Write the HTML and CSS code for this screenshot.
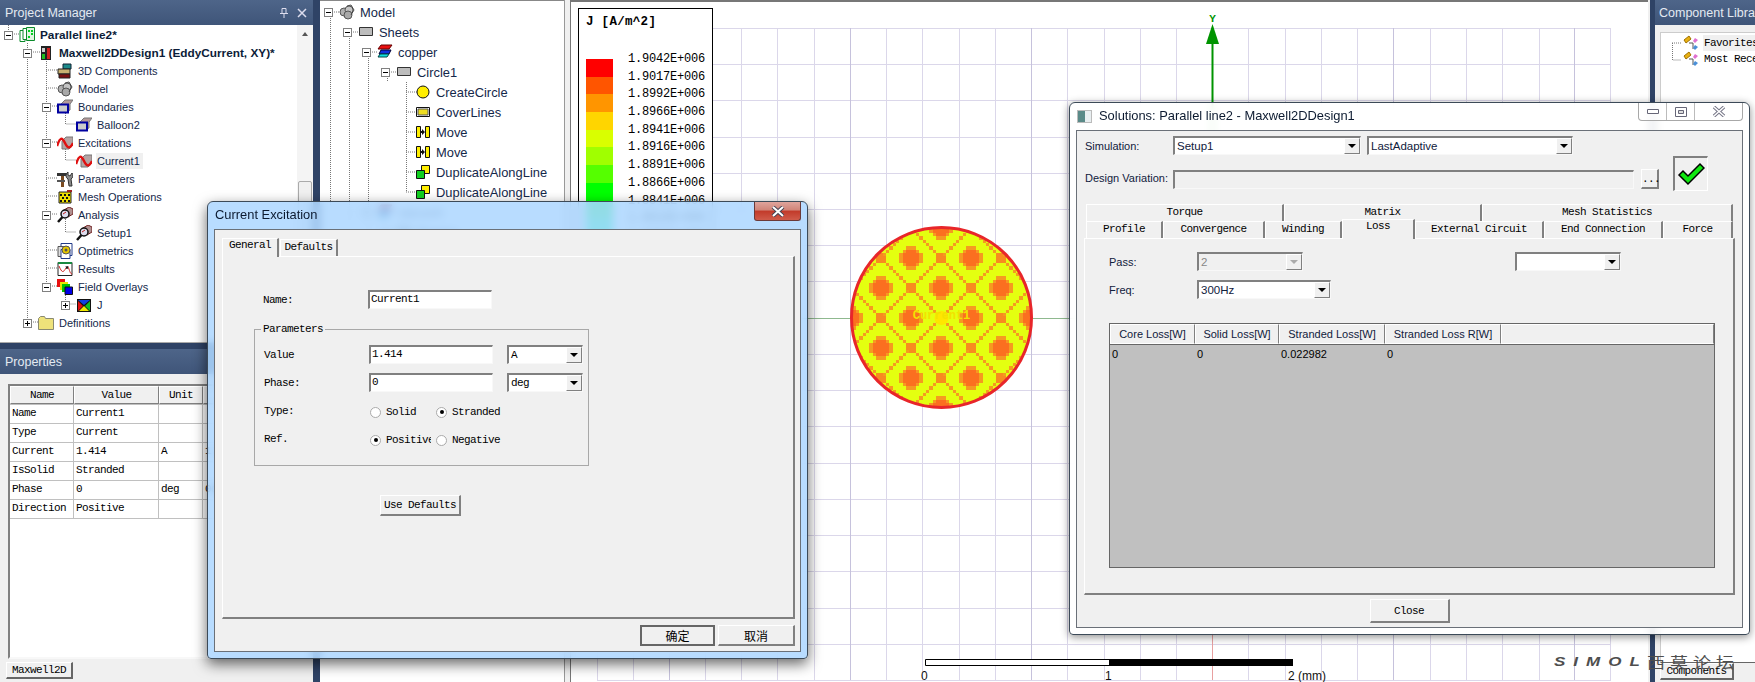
FILE: index.html
```html
<!DOCTYPE html>
<html lang="en">
<head>
    <meta charset="UTF-8">
    <title>Maxwell2D - Parallel line2</title>
    <link rel="stylesheet" href="styles.css">
</head>
<body>
    <!-- icon set used by the trees -->
    <svg class="defs" width="0" height="0">
        <symbol id="i-project" viewBox="0 0 16 16"><path d="M1 3.500h5v11h-5z" fill="#fff" stroke="#0a8a2a"/><path d="M4 1.500h6v11h-6z" fill="#fff" stroke="#0a8a2a"/><path d="M7.500.5h8v13h-8z" fill="#dff5e0" stroke="#0a8a2a"/><path d="M9 3h2v2h-2zM12 3h2v2h-2zM12 6h2v2h-2zM9 9h2v2h-2z" fill="#00d020"/></symbol>
        <symbol id="i-design" viewBox="0 0 16 16"><path d="M3 1h10v14h-10z" fill="#222"/><path d="M4 9h3v5h-3z" fill="#1ec020"/><path d="M9 3h3v11h-3z" fill="#d02020"/><path d="M4 3h3v4h-3z" fill="#ccc"/></symbol>
        <symbol id="i-comps" viewBox="0 0 16 16"><path d="M6 1h8v5h-8z" fill="#1c8a8a" stroke="#123"/><path d="M1 6h12v5h-12z" fill="#c8b070" stroke="#222"/><path d="M2 11h11v4h-11z" fill="#7a1010" stroke="#222"/></symbol>
        <symbol id="i-model" viewBox="0 0 16 16"><circle cx="5" cy="8" r="4" fill="#b0b0b0" stroke="#555"/><circle cx="10" cy="6" r="4" fill="#c4c4c4" stroke="#555"/><circle cx="9" cy="11" r="4" fill="#a8a8a8" stroke="#555"/><path d="M8 2l4-1 3 5-3 5" fill="none" stroke="#444"/></symbol>
        <symbol id="i-boundary" viewBox="0 0 16 16"><path d="M4 5l4-4h8l-3 4v6l-2 1h-7z" fill="#b49a9a" stroke="#777"/><path d="M1 5.500h10v8h-10z" fill="#ccc" stroke="#0000a0" stroke-width="2"/></symbol>
        <symbol id="i-excitation" viewBox="0 0 16 16"><path d="M5 6l4-4h7v8l-4 4h-7z" fill="#b4a4a4" stroke="#777"/><path d="M0 11c3-9 5-9 8-3s5 6 8 0" fill="none" stroke="#e01010" stroke-width="2.500"/></symbol>
        <symbol id="i-params" viewBox="0 0 16 16"><path d="M0 2h10v3h-10z" fill="#333"/><path d="M4 5h3v11h-3z" fill="#7a4a20"/><path d="M11 1a4 4 0 0 0 0 7l1 7h3l-1-7a4 4 0 0 0 1-6l-2 3-2-1z" fill="#888" stroke="#333"/><path d="M0 9h8v2h-8z" fill="#555"/></symbol>
        <symbol id="i-mesh" viewBox="0 0 16 16"><path d="M2 3h12v11h-12z" fill="#eedd00" stroke="#222"/><path d="M3 5h2v2h-2zM7 5h2v2h-2zM11 5h2v2h-2zM5 8h2v2h-2zM9 8h2v2h-2zM3 11h2v2h-2zM7 11h2v2h-2zM11 11h2v2h-2z" fill="#111"/><path d="M10 1h5v2h-5z" fill="#a02020"/></symbol>
        <symbol id="i-analysis" viewBox="0 0 16 16"><path d="M7 3l5-3 4 2v5l-5 3z" fill="#b09090" stroke="#702020"/><circle cx="8" cy="7" r="4" fill="#dde" stroke="#111" stroke-width="1.500"/><path d="M5.500 10l-4.500 5" stroke="#111" stroke-width="2.500"/><path d="M6 7l3-2" stroke="#c02020"/></symbol>
        <symbol id="i-opti" viewBox="0 0 16 16"><path d="M4 .5h11v12h-11z" fill="#fff" stroke="#223a88"/><path d="M1 3.500h10v10h-10z" fill="#ddd" stroke="#555"/><path d="M4 6.500h9v9h-9z" fill="#fff" stroke="#223a88"/><circle cx="9" cy="7" r="4" fill="#e6c800" stroke="#555"/><circle cx="9" cy="7" r="1.500" fill="#555"/></symbol>
        <symbol id="i-results" viewBox="0 0 16 16"><path d="M1 1.500h14v13h-14z" fill="#fff" stroke="#222"/><path d="M1 1h14v2h-14z" fill="#1a8a40"/><path d="M2 5c3 7 4 7 7 2s3 6 6 6" fill="none" stroke="#d02020"/><path d="M9 5l1 3 1-3" fill="none" stroke="#222"/></symbol>
        <symbol id="i-overlay" viewBox="0 0 16 16"><path d="M0 0h8v8h-8z" fill="#e81010"/><path d="M3 3h8v8h-8z" fill="#e8e800"/><path d="M5 5h8v8h-8z" fill="#00c000"/><path d="M8 8h7.500v7.500h-7.500z" fill="#0000e8" stroke="#111"/></symbol>
        <symbol id="i-j" viewBox="0 0 16 16"><path d="M1 2h14v13h-14z" fill="#111"/><path d="M2 3l12 0-6 5z" fill="#1040e0"/><path d="M2 4v10l5-5z" fill="#e01010"/><path d="M14 4v10l-5-5z" fill="#10c020"/><path d="M3 14h10l-5-5z" fill="#f0e800"/></symbol>
        <symbol id="i-folder" viewBox="0 0 16 16"><path d="M.5 3.500l2-2h4l1 2h8v11h-15z" fill="#eee27a" stroke="#8a8a70"/></symbol>
        <symbol id="i-sheet" viewBox="0 0 16 16"><path d="M1.500 3.500h13v8h-13z" fill="#bcbcbc" stroke="#333"/></symbol>
        <symbol id="i-copper" viewBox="0 0 16 16"><path d="M4 1h11l-3 4h-11z" fill="#e81010" stroke="#600"/><path d="M4 6h10l-2 4h-10z" fill="#1030e0" stroke="#003"/><path d="M3 10h9l-2 3h-9z" fill="#10e0e0" stroke="#044"/></symbol>
        <symbol id="i-circle" viewBox="0 0 16 16"><circle cx="8" cy="8" r="6" fill="#ffee00" stroke="#111"/></symbol>
        <symbol id="i-cover" viewBox="0 0 16 16"><path d="M1.500 3.500h13v9h-13z" fill="#fff" stroke="#111"/><path d="M3 5h10v6h-10z" fill="#eedd20" stroke="#555"/></symbol>
        <symbol id="i-move" viewBox="0 0 16 16"><path d="M1.500 2.500h4v11h-4zM10.500 2.500h4v11h-4z" fill="#ffee00" stroke="#111"/><path d="M6 7h1v-2l3 3-3 3v-2h-1z" fill="#111"/></symbol>
        <symbol id="i-dup" viewBox="0 0 16 16"><path d="M6.500 1.500h8v8h-8z" fill="#ffee00" stroke="#111"/><path d="M1.500 6.500h8v8h-8z" fill="#10d020" stroke="#111"/></symbol>
        <symbol id="i-lib" viewBox="0 0 16 16"><path d="M1 5l5-4 2 3-5 4z" fill="#e8b010" stroke="#a07000"/><path d="M6 8h4v6" fill="none" stroke="#555"/><path d="M12 3l3 2-3 3-2-2z" fill="#e070d0"/><path d="M12 10l3 2-3 3-2-2z" fill="#4a90d8"/></symbol>
    </svg>

    <div class="app">
        <!-- project manager + properties -->
        <div class="left">
            <section class="project">
                <div class="pane-title"><span>Project Manager</span><span class="title-btns"><svg width="10" height="12" viewBox="0 0 10 12"><path d="M3 1.500h4v5h-4zM1 6.500h8M5 7v4" fill="none" stroke="#dde"/></svg><svg width="10" height="10" viewBox="0 0 10 10"><path d="M1 1l8 8M9 1l-8 8" stroke="#dde" stroke-width="1.500"/></svg></span></div>
                <div class="tree-box">
                    <svg class="tree-lines" width="297" height="318" viewBox="0 26 297 318"><path d="M8.500 26v5M27.500 44v275M46.500 62v230M27 53h13M46 71h11M46 89h11M46 107h11M46 143h11M46 179h11M46 197h11M46 215h11M46 251h11M46 269h11M46 287h11M65.500 112v13h11M65.500 148v13h11M65.500 220v13h11M65.500 292v13h11M8 35h11M27 323h12" fill="none" stroke="#777" stroke-dasharray="1 1"/></svg>
                    <div class="tree">
                        <div class="row l0"><span class="exp minus"></span><svg class="ic"><use href="#i-project"/></svg><b>Parallel line2*</b></div>
                        <div class="row l1"><span class="exp minus"></span><svg class="ic"><use href="#i-design"/></svg><b>Maxwell2DDesign1 (EddyCurrent, XY)*</b></div>
                        <div class="row l2"><span class="exp none"></span><svg class="ic"><use href="#i-comps"/></svg><span>3D Components</span></div>
                        <div class="row l2"><span class="exp none"></span><svg class="ic"><use href="#i-model"/></svg><span>Model</span></div>
                        <div class="row l2"><span class="exp minus"></span><svg class="ic"><use href="#i-boundary"/></svg><span>Boundaries</span></div>
                        <div class="row l3"><span class="exp none"></span><svg class="ic"><use href="#i-boundary"/></svg><span>Balloon2</span></div>
                        <div class="row l2"><span class="exp minus"></span><svg class="ic"><use href="#i-excitation"/></svg><span>Excitations</span></div>
                        <div class="row l3"><span class="exp none"></span><svg class="ic"><use href="#i-excitation"/></svg><span class="picked">Current1</span></div>
                        <div class="row l2"><span class="exp none"></span><svg class="ic"><use href="#i-params"/></svg><span>Parameters</span></div>
                        <div class="row l2"><span class="exp none"></span><svg class="ic"><use href="#i-mesh"/></svg><span>Mesh Operations</span></div>
                        <div class="row l2"><span class="exp minus"></span><svg class="ic"><use href="#i-analysis"/></svg><span>Analysis</span></div>
                        <div class="row l3"><span class="exp none"></span><svg class="ic"><use href="#i-analysis"/></svg><span>Setup1</span></div>
                        <div class="row l2"><span class="exp none"></span><svg class="ic"><use href="#i-opti"/></svg><span>Optimetrics</span></div>
                        <div class="row l2"><span class="exp none"></span><svg class="ic"><use href="#i-results"/></svg><span>Results</span></div>
                        <div class="row l2"><span class="exp minus"></span><svg class="ic"><use href="#i-overlay"/></svg><span>Field Overlays</span></div>
                        <div class="row l3"><span class="exp plus"></span><svg class="ic"><use href="#i-j"/></svg><span>J</span></div>
                        <div class="row l1"><span class="exp plus"></span><svg class="ic"><use href="#i-folder"/></svg><span>Definitions</span></div>
                    </div>
                    <div class="scrollbar"><span class="sb-up"></span><span class="sb-thumb"></span></div>
                </div>
            </section>
            <div class="sash-h"></div>
            <section class="props">
                <div class="pane-title"><span>Properties</span></div>
                <div class="props-body">
                    <div class="props-frame">
                        <div class="prop-row prop-head"><span>Name</span><span>Value</span><span>Unit</span><span>Evaluated</span></div>
                        <div class="prop-row"><span>Name</span><span>Current1</span><span></span><span></span></div>
                        <div class="prop-row"><span>Type</span><span>Current</span><span></span><span></span></div>
                        <div class="prop-row"><span>Current</span><span>1.414</span><span>A</span><span>1.414A</span></div>
                        <div class="prop-row"><span>IsSolid</span><span>Stranded</span><span></span><span></span></div>
                        <div class="prop-row"><span>Phase</span><span>0</span><span>deg</span><span>0deg</span></div>
                        <div class="prop-row"><span>Direction</span><span>Positive</span><span></span><span></span></div>
                    </div>
                    <div class="bottom-tab">Maxwell2D</div>
                </div>
            </section>
        </div>
        <div class="sash-v"></div>

        <!-- model tree -->
        <div class="model-tree">
            <svg class="tree-lines" width="244" height="260" viewBox="320 0 244 260"><path d="M330.500 16v190M349.500 36v190M368.500 56v190M387.500 76v6M406.500 82v110M330 12h10M349 32h11M368 52h10M387 72h11M406 92h12M406 112h12M406 132h12M406 152h12M406 172h12M406 192h12M368 212h10" fill="none" stroke="#777" stroke-dasharray="1 1"/></svg>
            <div class="tree tall">
                <div class="row l0"><span class="exp minus"></span><svg class="ic"><use href="#i-model"/></svg><span>Model</span></div>
                <div class="row l1"><span class="exp minus"></span><svg class="ic"><use href="#i-sheet"/></svg><span>Sheets</span></div>
                <div class="row l2"><span class="exp minus"></span><svg class="ic"><use href="#i-copper"/></svg><span>copper</span></div>
                <div class="row l3"><span class="exp minus"></span><svg class="ic"><use href="#i-sheet"/></svg><span>Circle1</span></div>
                <div class="row l4"><span class="exp none"></span><svg class="ic"><use href="#i-circle"/></svg><span>CreateCircle</span></div>
                <div class="row l4"><span class="exp none"></span><svg class="ic"><use href="#i-cover"/></svg><span>CoverLines</span></div>
                <div class="row l4"><span class="exp none"></span><svg class="ic"><use href="#i-move"/></svg><span>Move</span></div>
                <div class="row l4"><span class="exp none"></span><svg class="ic"><use href="#i-move"/></svg><span>Move</span></div>
                <div class="row l4"><span class="exp none"></span><svg class="ic"><use href="#i-dup"/></svg><span>DuplicateAlongLine</span></div>
                <div class="row l4"><span class="exp none"></span><svg class="ic"><use href="#i-dup"/></svg><span>DuplicateAlongLine</span></div>
                <div class="row l2"><span class="exp minus"></span><svg class="ic"><use href="#i-copper"/></svg><span>vacuum</span></div>
                <div class="row l3"><span class="exp minus"></span><svg class="ic"><use href="#i-sheet"/></svg><span>Region</span></div>
            </div>
        </div>
        <div class="sash-gap"></div>

        <!-- 2D view -->
        <div class="view">
            <svg class="canvas" width="1078" height="682" viewBox="570 0 1078 682">
                <defs>
                    <pattern id="solve" x="926" y="273" width="60" height="60" patternUnits="userSpaceOnUse" viewBox="0 0 18 18" shape-rendering="crispEdges">
                        <rect width="18" height="18" fill="#e4ff10"/>
                        <path fill="#f59a20" d="M3 1h3v7h-3zM1 3h7v3h-7zM2 2h5v5h-5zM12 10h3v7h-3zM10 12h7v3h-7zM11 11h5v5h-5z"/>
                        <path fill="#fb6f20" d="M2 3h5v3h-5zM3 2h3v5h-3zM11 12h5v3h-5zM12 11h3v5h-3z"/>
                        <path fill="#f88a20" d="M12 3h3v3h-3zM3 12h3v3h-3z"/>
                        <path fill="#f59a20" d="M12 5h1v1h-1zM11 6h1v1h-1zM10 7h1v1h-1zM9 8h1v1h-1zM8 9h1v1h-1zM7 10h1v1h-1zM6 11h1v1h-1zM5 12h1v1h-1zM15 6h1v1h-1zM16 7h1v1h-1zM17 8h1v1h-1zM0 9h1v1h-1zM1 10h1v1h-1zM2 11h1v1h-1zM6 15h1v1h-1zM7 16h1v1h-1zM8 17h1v1h-1zM9 0h1v1h-1zM10 1h1v1h-1zM11 2h1v1h-1zM15 2h1v1h-1zM16 1h1v1h-1zM17 0h1v1h-1zM0 17h1v1h-1zM1 16h1v1h-1zM2 15h1v1h-1z"/>
                    </pattern>
                </defs>
                <path class="grid" d="M597.500 28V680M633.500 28V680M705.500 28V680M741.500 28V680M777.500 28V680M814.500 28V680M886.500 28V680M922.500 28V680M959.500 28V680M995.500 28V680M1067.500 28V680M1104.500 28V680M1140.500 28V680M1176.500 28V680M1248.500 28V680M1285.500 28V680M1321.500 28V680M1357.500 28V680M1430.500 28V680M1466.500 28V680M1502.500 28V680M1539.500 28V680M1610.500 28V680"/>
                <path class="grid" d="M597 28.500H1611M597 64.500H1611M597 100.500H1611M597 137.500H1611M597 173.500H1611M597 209.500H1611M597 245.500H1611M597 281.500H1611M597 354.500H1611M597 390.500H1611M597 426.500H1611M597 463.500H1611M597 499.500H1611M597 535.500H1611M597 571.500H1611M597 608.500H1611M597 644.500H1611M597 680.500H1611"/>
                <path class="grid-major" d="M669.500 28V680M850.500 28V680M1031.500 28V680M1393.500 28V680M1574.500 28V680"/>
                <path d="M1212.500 420V680" stroke="#e8a0a0" fill="none"/>
                <path d="M597 318.500H1610" stroke="#8fb98f" fill="none"/>
                <path d="M1212.500 44V318" stroke="#009400" stroke-width="2" fill="none"/>
                <path d="M1212.500 24l6.500 20h-13z" fill="#009400"/>
                <text class="axis-label" x="1212.500" y="22">Y</text>
                <circle cx="941.500" cy="317.500" r="90" fill="url(#solve)" stroke="#e8262a" stroke-width="3"/>
                <circle cx="941.500" cy="318" r="7" fill="#ffe600"/>
                <text class="coil-label" x="941.500" y="319">Current1</text>
                <path d="M925.500 659.500h184v6h-184z" fill="#fff" stroke="#000"/>
                <path d="M1109 659h184v7h-184z" fill="#000"/>
                <text class="scale-label" x="921" y="680">0</text>
                <text class="scale-label" x="1105" y="680">1</text>
                <text class="scale-label" x="1288" y="680">2 (mm)</text>
            </svg>
            <div class="legend">
                <div class="legend-title">J [A/m^2]</div>
                <div class="legend-body">
                    <div class="legend-bars">
                        <span class="bar-0"></span><span class="bar-1"></span><span class="bar-2"></span><span class="bar-3"></span><span class="bar-4"></span><span class="bar-5"></span><span class="bar-6"></span><span class="bar-7"></span><span class="bar-8"></span><span class="bar-9"></span><span class="bar-10"></span>
                    </div>
                    <div class="legend-vals">
                        <span>1.9042E+006</span><span>1.9017E+006</span><span>1.8992E+006</span><span>1.8966E+006</span><span>1.8941E+006</span><span>1.8916E+006</span><span>1.8891E+006</span><span>1.8866E+006</span><span>1.8841E+006</span><span>1.8816E+006</span><span>1.8791E+006</span>
                    </div>
                </div>
            </div>
        </div>
        <div class="sash-v thin"></div>

        <!-- component library -->
        <div class="right">
            <div class="pane-title"><span>Component Library</span></div>
            <div class="lib-body">
                <div class="lib-tree">
                    <svg class="tree-lines" width="12" height="34" viewBox="0 0 12 34"><path d="M2.500 8v17h9M2 8h10" fill="none" stroke="#777" stroke-dasharray="1 1"/></svg>
                    <div class="lib-row"><svg class="ic"><use href="#i-lib"/></svg><span class="picked">Favorites</span></div>
                    <div class="lib-row"><svg class="ic"><use href="#i-lib"/></svg><span>Most Recently Used</span></div>
                </div>
                <div class="bottom-tab lib-tab">Components</div>
            </div>
        </div>
    </div>

    <!-- Current Excitation dialog -->
    <div class="win win-current">
        <div class="caption">
            <span class="caption-text">Current Excitation</span>
            <span class="close-red"><svg width="14" height="11" viewBox="0 0 14 11"><path d="M2 1l10 9M12 1l-10 9" stroke="#445" stroke-width="4"/><path d="M2 1l10 9M12 1l-10 9" stroke="#fff" stroke-width="2"/></svg></span>
        </div>
        <div class="client">
            <div class="tabs small-tabs">
                <span class="tab active tab-general">General</span><span class="tab tab-defaults">Defaults</span>
            </div>
            <div class="tab-pane current-pane">
                <div class="form-row name-row"><label>Name:</label><span class="field">Current1</span></div>
                <fieldset class="group">
                    <legend>Parameters</legend>
                    <div class="form-row"><label>Value</label><span class="field">1.414</span><span class="combo unit"><span class="combo-text">A</span><i class="arrow"></i></span></div>
                    <div class="form-row"><label>Phase:</label><span class="field">0</span><span class="combo unit"><span class="combo-text">deg</span><i class="arrow"></i></span></div>
                    <div class="form-row"><label>Type:</label><span class="radios"><span class="radio-item"><i class="radio"></i>Solid</span><span class="radio-item"><i class="radio on"></i>Stranded</span></span></div>
                    <div class="form-row"><label>Ref.</label><span class="radios"><span class="radio-item clip"><i class="radio on"></i>Positive</span><span class="radio-item"><i class="radio"></i>Negative</span></span></div>
                </fieldset>
                <button class="btn use-defaults">Use Defaults</button>
            </div>
            <div class="dlg-buttons">
                <button class="btn cjk default">确定</button>
                <button class="btn cjk cancel">取消</button>
            </div>
        </div>
    </div>

    <!-- Solutions dialog -->
    <div class="win win-solutions">
        <div class="caption">
            <span class="app-icon"></span>
            <span class="caption-text">Solutions: Parallel line2 - Maxwell2DDesign1</span>
            <span class="cap-group">
                <span class="cap-btn"><svg width="12" height="6" viewBox="0 0 12 6"><path d="M.5.5h11v4h-11z" fill="#fff" stroke="#667"/></svg></span>
                <span class="cap-btn"><svg width="12" height="10" viewBox="0 0 12 10"><path d="M.5.5h11v9h-11z" fill="#fff" stroke="#667"/><path d="M3.500 3.500h5v3h-5z" fill="#ddd" stroke="#667"/></svg></span>
                <span class="cap-btn wide"><svg width="14" height="11" viewBox="0 0 14 11"><path d="M2 1l10 9M12 1l-10 9" stroke="#778" stroke-width="3.500"/><path d="M2 1l10 9M12 1l-10 9" stroke="#fff" stroke-width="1.500"/></svg></span>
            </span>
        </div>
        <div class="client sol-client">
            <div class="sol-top">
                <label class="sans">Simulation:</label>
                <span class="combo sans"><span class="combo-text">Setup1</span><i class="arrow"></i></span>
                <span class="combo sans second"><span class="combo-text">LastAdaptive</span><i class="arrow"></i></span>
                <label class="sans dv-label">Design Variation:</label>
                <span class="field disabled dv-field"></span>
                <button class="btn dots">...</button>
                <span class="check-btn"><svg width="28" height="24" viewBox="0 0 28 24"><path d="M2 13l4-4 5 5L23 2l4 4-16 16z" fill="#10e810" stroke="#000" stroke-width="1.500"/></svg></span>
            </div>
            <div class="tabs tabs-row1">
                <span class="tab w-torque">Torque</span><span class="tab w-matrix">Matrix</span><span class="tab w-mesh">Mesh Statistics</span>
            </div>
            <div class="tabs tabs-row2">
                <span class="tab w-profile">Profile</span><span class="tab w-conv">Convergence</span><span class="tab w-wind">Winding</span><span class="tab active w-loss">Loss</span><span class="tab w-ext">External Circuit</span><span class="tab w-end">End Connection</span><span class="tab w-force">Force</span>
            </div>
            <div class="tab-pane sol-pane">
                <div class="loss-form">
                    <label class="sans">Pass:</label>
                    <span class="combo sans off w-pass"><span class="combo-text">2</span><i class="arrow"></i></span>
                    <span class="combo sans w-pass blank"><span class="combo-text"></span><i class="arrow"></i></span>
                    <label class="sans">Freq:</label>
                    <span class="combo sans w-freq"><span class="combo-text">300Hz</span><i class="arrow"></i></span>
                </div>
                <div class="loss-table">
                    <div class="loss-row loss-head"><span>Core Loss[W]</span><span>Solid Loss[W]</span><span>Stranded Loss[W]</span><span>Stranded Loss R[W]</span><span></span></div>
                    <div class="loss-row loss-data"><span>0</span><span>0</span><span>0.022982</span><span>0</span><span></span></div>
                </div>
            </div>
            <div class="close-row"><button class="btn close-btn">Close</button></div>
        </div>
    </div>

    <div class="watermark"><span class="wm-latin">SIMOL</span><span class="wm-cjk">西莫论坛</span></div>
</body>
</html>
```

FILE: styles.css
```css
/* page is one fixed desktop-sized window */
html, body {
    margin: 0;
    height: 100%;
    overflow: hidden;
}
body {
    position: relative;
    width: 1755px;
    height: 682px;
    background: #f0f0f0;
    font-family: "Liberation Sans", Arial, sans-serif;
    font-size: 12px;
    color: #000;
}
.defs {
    position: absolute;
}
.app {
    display: flex;
    height: 682px;
}

/* docked panes */
.left {
    width: 313px;
    display: flex;
    flex-direction: column;
}
.pane-title {
    height: 25px;
    flex: none;
    display: flex;
    align-items: center;
    justify-content: space-between;
    padding: 0 5px;
    background: linear-gradient(to bottom, #4e6589, #3f5579);
    color: #e4eaf2;
    font-size: 12.500px;
    white-space: nowrap;
    overflow: hidden;
}
.title-btns {
    display: flex;
    gap: 8px;
    align-items: center;
    padding-right: 1px;
}
.project {
    height: 343px;
    display: flex;
    flex-direction: column;
}
.tree-box {
    position: relative;
    flex: 1;
    background: #fff;
    border-bottom: 1px solid #aaa;
}
.tree-lines {
    position: absolute;
    left: 0;
    top: 0;
}
.tree {
    position: relative;
    padding-top: 1px;
    font-size: 11px;
    color: #14284a;
}
.row {
    display: flex;
    align-items: center;
    height: 18px;
    white-space: nowrap;
}
.row b {
    color: #0c1c38;
    font-size: 11.800px;
}
.l0 { padding-left: 4px; }
.l1 { padding-left: 23px; }
.l2 { padding-left: 42px; }
.l3 { padding-left: 61px; }
.l4 { padding-left: 80px; }
.exp {
    position: relative;
    width: 9px;
    height: 9px;
    flex: none;
    margin-right: 6px;
    border: 1px solid #808080;
    box-sizing: border-box;
    background: #fff;
}
.exp.none {
    border: none;
    background: none;
}
.exp.minus::before,
.exp.plus::before {
    content: "";
    position: absolute;
    left: 1px;
    top: 3px;
    width: 5px;
    height: 1px;
    background: #000;
}
.exp.plus::after {
    content: "";
    position: absolute;
    left: 3px;
    top: 1px;
    width: 1px;
    height: 5px;
    background: #000;
}
.ic {
    width: 16px;
    height: 16px;
    flex: none;
    margin-right: 5px;
}
.picked {
    background: #f0f0f0;
    padding: 2px 3px 2px 1px;
    margin-left: -1px;
}
.scrollbar {
    position: absolute;
    right: 0;
    top: 0;
    bottom: 0;
    width: 16px;
    background: #f4f4f4;
    display: flex;
    flex-direction: column;
    align-items: center;
}
.sb-up {
    width: 0;
    height: 0;
    margin-top: 7px;
    border: 3px solid transparent;
    border-top: none;
    border-bottom: 4px solid #555;
}
.sb-thumb {
    width: 14px;
    height: 130px;
    margin-top: 145px;
    background: #f0f0f0;
    border: 1px solid #aaa;
    box-sizing: border-box;
    border-radius: 2px;
}
.sash-h {
    height: 6px;
    flex: none;
    background: #2f4366;
}
.sash-v {
    width: 7px;
    flex: none;
    background: #2f4366;
}
.sash-v.thin {
    width: 5px;
    margin-left: 2px;
}
.props {
    flex: 1;
    display: flex;
    flex-direction: column;
}

/* SimSun-looking monospace used all over the old dialogs */
.props-body,
.tab,
.current-pane,
.btn,
.lib-tree,
.bottom-tab {
    font-family: "Liberation Mono", "DejaVu Sans Mono", monospace;
    font-size: 11px;
    letter-spacing: -0.600px;
}
.props-body {
    flex: 1;
    padding: 10px 5px 0 8px;
}
.props-frame {
    height: 275px;
    box-sizing: border-box;
    background: #fff;
    border: 2px solid #808080;
    border-right-color: #f8f8f8;
    border-bottom-color: #f8f8f8;
}
.prop-row {
    display: grid;
    grid-template-columns: 64px 85px 44px 1fr;
    height: 19px;
    border-bottom: 1px solid #c0c0c0;
    box-sizing: border-box;
    line-height: 17px;
}
.prop-row span {
    border-right: 1px solid #c0c0c0;
    padding-left: 2px;
    white-space: nowrap;
    overflow: hidden;
}
.prop-head {
    background: #f0f0f0;
    text-align: center;
}
.prop-head span {
    border: 1px solid #fff;
    border-right-color: #808080;
    border-bottom-color: #808080;
    padding: 0;
}
.bottom-tab {
    width: 67px;
    height: 17px;
    margin: 3px 0 0 -2px;
    line-height: 15px;
    text-align: center;
    box-sizing: border-box;
    background: #f0f0f0;
    border: 1px solid #fff;
    border-right: 2px solid #666;
    border-bottom: 2px solid #666;
}

/* model tree */
.model-tree {
    position: relative;
    width: 244px;
    flex: none;
    background: #fff;
    border-top: 1px solid #888;
    box-sizing: border-box;
    overflow: hidden;
}
.model-tree .tree-lines {
    top: -1px;
}
.tree.tall {
    font-size: 12.900px;
}
.tree.tall .row {
    height: 20px;
}
.sash-gap {
    width: 6px;
    flex: none;
    background: #f0f0f0;
    border-left: 1px solid #999;
    box-sizing: border-box;
}

/* 2d view */
.view {
    position: relative;
    width: 1078px;
    flex: none;
    background: #fff;
    border-left: 1px solid #777;
    border-top: 2px solid #777;
    box-sizing: border-box;
    overflow: hidden;
}
.canvas {
    position: absolute;
    left: -1px;
    top: -2px;
}
.grid {
    fill: none;
    stroke: #dbd7ea;
}
.grid-major {
    fill: none;
    stroke: #c6c2dc;
}
.axis-label {
    font-family: "Liberation Mono", monospace;
    font-size: 11px;
    font-weight: bold;
    fill: #009400;
    text-anchor: middle;
}
.coil-label {
    font-family: "Liberation Mono", monospace;
    font-size: 12px;
    font-weight: bold;
    fill: #f2e200;
    text-anchor: middle;
}
.scale-label {
    font-family: "Liberation Sans", Arial, sans-serif;
    font-size: 12px;
    fill: #111;
}
.legend {
    position: absolute;
    left: 7px;
    top: 6px;
    width: 135px;
    height: 320px;
    box-sizing: border-box;
    background: #fff;
    border: 1px solid #000;
    padding: 6px 7px;
    font-family: "Liberation Mono", monospace;
}
.legend-title {
    font-size: 12.500px;
    font-weight: bold;
    letter-spacing: 0.300px;
}
.legend-body {
    display: flex;
    gap: 15px;
    margin-top: 30px;
}
.legend-bars {
    display: flex;
    flex-direction: column;
    width: 35px;
}
.legend-bars span {
    height: 17.700px;
}
.bar-0 { background: #ff0000; }
.bar-1 { background: #ff5500; }
.bar-2 { background: #ff9500; }
.bar-3 { background: #ffd500; }
.bar-4 { background: #d9ff00; }
.bar-5 { background: #a0ff00; }
.bar-6 { background: #55ff00; }
.bar-7 { background: #00ff00; }
.bar-8 { background: #00ff55; }
.bar-9 { background: #00ff99; }
.bar-10 { background: #00ffd5; }
.legend-vals {
    display: flex;
    flex-direction: column;
    margin-top: -8px;
    font-size: 12px;
    letter-spacing: -0.200px;
    white-space: nowrap;
}
.legend-vals span {
    height: 17.700px;
    line-height: 17px;
}

/* component library */
.right {
    flex: 1;
    display: flex;
    flex-direction: column;
    overflow: hidden;
}
.right .pane-title {
    justify-content: flex-start;
    padding-left: 4px;
}
.lib-body {
    flex: 1;
    padding: 7px 0 2px 5px;
    display: flex;
    flex-direction: column;
}
.lib-tree {
    position: relative;
    flex: 1;
    background: #fff;
    padding: 2px 0 0 22px;
    white-space: nowrap;
    overflow: hidden;
    border-left: 1px solid #ccc;
    border-top: 1px solid #ccc;
    border-bottom: 1px solid #666;
}
.lib-tree .tree-lines {
    left: 9px;
    top: 2px;
}
.lib-row {
    display: flex;
    align-items: center;
    height: 16px;
}
.lib-tab {
    width: 74px;
    margin: 0;
}

/* floating dialogs: aero glass frame */
.win {
    position: absolute;
    box-sizing: border-box;
    border: 1px solid #3c4a58;
    border-radius: 6px 6px 4px 4px;
    display: flex;
    flex-direction: column;
    padding: 0 6px 6px;
    backdrop-filter: blur(4px);
    box-shadow: 0 5px 14px rgba(0, 0, 0, 0.6);
}
.win-current {
    left: 207px;
    top: 201px;
    width: 601px;
    height: 458px;
    background: rgba(172, 214, 255, 0.85);
}
.win-solutions {
    left: 1069px;
    top: 102px;
    width: 681px;
    height: 533px;
    background: rgba(255, 255, 255, 0.88);
    box-shadow: 0 2px 8px rgba(0, 0, 0, 0.45);
}
.caption {
    height: 27px;
    flex: none;
    display: flex;
    align-items: flex-start;
    color: #0c1a30;
    font-size: 12.900px;
}
.caption-text {
    margin: 5px 0 0 1px;
    white-space: nowrap;
}
.close-red {
    margin-left: auto;
    width: 47px;
    height: 19px;
    display: flex;
    align-items: center;
    justify-content: center;
    box-sizing: border-box;
    border: 1px solid #6b3a3a;
    border-top: none;
    border-radius: 0 0 3px 3px;
    background: linear-gradient(to bottom, #dfa49c 0%, #d08478 45%, #c23a2a 50%, #cf5b4a 100%);
}
.app-icon {
    width: 15px;
    height: 13px;
    margin: 7px 6px 0 1px;
    background: linear-gradient(to right, #5a8a88 0 55%, #e8eef0 55%);
    border: 1px solid #bbb;
    box-sizing: border-box;
}
.cap-group {
    margin-left: auto;
    display: flex;
    height: 18px;
    box-sizing: border-box;
    border: 1px solid #a8a8a8;
    border-top: none;
    border-radius: 0 0 4px 4px;
    background: rgba(255, 255, 255, 0.5);
}
.cap-btn {
    width: 27px;
    display: flex;
    align-items: center;
    justify-content: center;
    border-right: 1px solid #bbb;
}
.cap-btn.wide {
    width: 47px;
    border-right: none;
}
.client {
    flex: 1;
    background: #f0f0f0;
    border: 1px solid #6a7078;
    box-sizing: border-box;
    padding: 8px 5px 0 7px;
    display: flex;
    flex-direction: column;
}

/* tabs */
.tabs {
    display: flex;
    align-items: flex-end;
}
.tab {
    box-sizing: border-box;
    height: 17px;
    line-height: 15px;
    text-align: center;
    white-space: nowrap;
    background: #f0f0f0;
    border: 1px solid #fff;
    border-bottom: none;
    border-right: 2px solid #808080;
}
.tab.active {
    position: relative;
    z-index: 1;
    height: 20px;
    margin-bottom: -1px;
    line-height: 13px;
}
.small-tabs .tab {
    height: 17px;
}
.small-tabs .tab.active {
    height: 19px;
}
.tab-general { width: 57px; }
.tab-defaults { width: 58px; margin-left: 1px; }
.tab-pane {
    box-sizing: border-box;
    border: 1px solid #fff;
    border-right: 2px solid #808080;
    border-bottom: 2px solid #808080;
}
.current-pane {
    height: 363px;
    padding: 33px 0 0 31px;
}
.form-row {
    display: grid;
    grid-template-columns: 114px 124px 90px;
    height: 19px;
    align-items: center;
    margin-bottom: 9px;
}
.form-row label {
    padding-left: 9px;
}
.name-row {
    margin-bottom: 14px;
}
.unit {
    margin-left: 14px;
}
.field {
    box-sizing: border-box;
    height: 19px;
    line-height: 15px;
    padding-left: 1px;
    background: #fff;
    border: 2px solid #808080;
    border-right: 1px solid #f8f8f8;
    border-bottom: 1px solid #f8f8f8;
    overflow: hidden;
}
.field.disabled {
    background: #f0f0f0;
}
.group {
    box-sizing: border-box;
    width: 335px;
    height: 143px;
    margin: 0;
    padding: 10px 0 0;
    border: 1px solid #a8a8a8;
}
.group legend {
    margin-left: 6px;
    padding: 0 2px;
}
.combo {
    display: flex;
    box-sizing: border-box;
    height: 19px;
    background: #fff;
    border: 2px solid #808080;
    border-right: 1px solid #f8f8f8;
    border-bottom: 1px solid #f8f8f8;
}
.combo-text {
    flex: 1;
    padding-left: 2px;
    line-height: 16px;
    white-space: nowrap;
    overflow: hidden;
}
.combo .arrow {
    position: relative;
    width: 16px;
    flex: none;
    background: #f0f0f0;
    border: 1px solid #fff;
    border-right-color: #808080;
    border-bottom-color: #808080;
    box-sizing: border-box;
}
.combo .arrow::after {
    content: "";
    position: absolute;
    left: 3px;
    top: 5px;
    border: 4px solid transparent;
    border-bottom: none;
    border-top: 4px solid #000;
}
.radios {
    grid-column: 2 / 4;
    display: flex;
    margin-top: 3px;
}
.radio-item {
    width: 66px;
    display: flex;
    align-items: center;
    gap: 5px;
    margin-left: 1px;
    white-space: nowrap;
}
.radio-item + .radio-item {
    margin-left: 0;
    width: 100px;
}
.radio-item.clip {
    width: 61px;
    margin-right: 5px;
    overflow: hidden;
}
.radio {
    position: relative;
    width: 11px;
    height: 11px;
    flex: none;
    box-sizing: border-box;
    background: #fff;
    border: 1px solid #aaa;
    border-radius: 50%;
}
.radio.on::after {
    content: "";
    position: absolute;
    left: 2.500px;
    top: 2.500px;
    width: 4px;
    height: 4px;
    border-radius: 50%;
    background: #000;
}
.btn {
    box-sizing: border-box;
    padding: 0;
    background: #f0f0f0;
    color: #000;
    border: 1px solid #fff;
    border-right: 2px solid #808080;
    border-bottom: 2px solid #808080;
}
.use-defaults {
    display: block;
    width: 81px;
    height: 21px;
    margin: 29px 0 0 126px;
}
.dlg-buttons {
    display: flex;
    justify-content: flex-end;
    gap: 3px;
    margin-top: 6px;
}
.cjk {
    width: 75px;
    height: 21px;
    font-family: "Noto Sans CJK SC", sans-serif;
    font-size: 12px;
    letter-spacing: 0;
}
.cancel {
    width: 77px;
}
.default {
    border: 2px solid #666;
}

/* solutions dialog */
.sans {
    font-family: "Liberation Sans", Arial, sans-serif;
    font-size: 11px;
    color: #10203c;
}
.combo.sans {
    font-size: 11.500px;
}
.sol-client {
    padding: 5px 7px 0;
}
.sol-top {
    display: grid;
    grid-template-columns: 88px 188px 6px 206px 61px 7px 18px 14px 35px;
    grid-template-rows: 19px 20px;
    row-gap: 14px;
    align-items: center;
    padding-left: 1px;
}
.sol-top .second {
    grid-column: 4;
}
.dv-label {
    grid-column: 1;
    grid-row: 2;
    margin-top: -3px;
    white-space: nowrap;
}
.dv-field {
    grid-column: 2 / 6;
    grid-row: 2;
    height: 19px;
}
.dots {
    grid-column: 7;
    grid-row: 2;
    height: 20px;
    line-height: 14px;
}
.check-btn {
    grid-column: 9;
    grid-row: 1 / 3;
    align-self: end;
    margin-bottom: -2px;
    height: 35px;
    display: flex;
    align-items: center;
    justify-content: center;
    box-sizing: border-box;
    background: #f0f0f0;
    border: 2px solid #808080;
    border-right: 1px solid #fff;
    border-bottom: 1px solid #fff;
}
.tabs-row1 {
    margin: 15px 0 0 2px;
}
.tabs-row2 {
    position: relative;
    margin: -3px 0 0 2px;
}
.tabs-row1 .tab {
    height: 18px;
}
.w-torque { width: 198px; }
.w-matrix { width: 198px; }
.w-mesh { width: 251px; }
.w-profile { width: 77px; }
.w-conv { width: 102px; }
.w-wind { width: 77px; }
.w-loss { width: 73px; }
.w-ext { width: 129px; }
.w-end { width: 119px; }
.w-force { width: 70px; }
.sol-pane {
    height: 357px;
    width: 651px;
    padding: 13px 0 0 24px;
}
.loss-form {
    display: grid;
    grid-template-columns: 88px 106px 212px 106px;
    grid-template-rows: 19px 19px;
    row-gap: 9px;
    align-items: center;
}
.w-pass .combo-text,
.w-freq .combo-text {
    line-height: 17px;
}
.w-freq {
    width: 134px;
    grid-column: 2 / 4;
}
.blank {
    grid-column: 4;
}
.off {
    background: #f0f0f0;
    color: #888;
}
.off .arrow::after {
    border-top-color: #aaa;
}
.loss-table {
    box-sizing: border-box;
    width: 606px;
    height: 245px;
    margin-top: 24px;
    background: #c0c0c0;
    border: 1px solid #666;
    font-family: "Liberation Sans", Arial, sans-serif;
    font-size: 11px;
    color: #10203c;
}
.loss-row {
    display: grid;
    grid-template-columns: 85px 84px 106px 116px 1fr;
    height: 20px;
    line-height: 18px;
}
.loss-head {
    background: #f0f0f0;
    border-bottom: 1px solid #666;
    text-align: center;
}
.loss-head span {
    border: 1px solid #fff;
    border-right: 1px solid #808080;
    white-space: nowrap;
}
.loss-data {
    color: #000;
}
.loss-data span {
    padding-left: 2px;
}
.close-row {
    display: flex;
    justify-content: center;
    margin-top: 4px;
}
.close-btn {
    width: 80px;
    height: 24px;
}

/* forum watermark */
.watermark {
    position: absolute;
    left: 1554px;
    top: 649px;
    display: flex;
    align-items: center;
    gap: 4px;
    color: #4e4e4e;
    white-space: nowrap;
    transform: scaleY(0.8);
}
.wm-latin {
    width: 89px;
    font-size: 17px;
    font-weight: bold;
    font-style: italic;
    letter-spacing: 8px;
}
.wm-cjk {
    font-family: "Noto Sans CJK SC", sans-serif;
    font-size: 18px;
    letter-spacing: 5px;
}
```
